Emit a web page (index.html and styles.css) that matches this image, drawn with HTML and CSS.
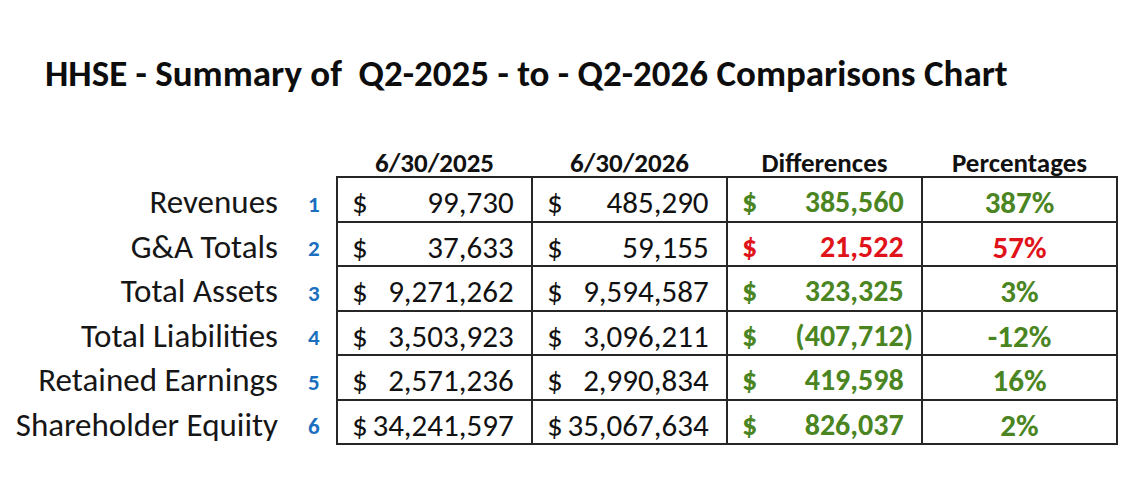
FILE: index.html
```html
<!DOCTYPE html>
<html>
<head>
<meta charset="utf-8">
<link rel="stylesheet" href="styles.css">
</head>
<body>
<h1 class="title">HHSE - Summary of&nbsp; Q2-2025 - to - Q2-2026 Comparisons Chart</h1>
<table class="chart">
  <colgroup>
    <col class="c-label"><col class="c-num"><col class="c-data"><col class="c-data"><col class="c-data"><col class="c-data">
  </colgroup>
  <thead>
    <tr>
      <th></th><th></th>
      <th class="hd">6/30/2025</th>
      <th class="hd">6/30/2026</th>
      <th class="hd">Differences</th>
      <th class="hd">Percentages</th>
    </tr>
  </thead>
  <tbody>
    <tr>
      <td class="label">Revenues</td><td class="num">1</td>
      <td class="money"><span class="cur">$</span><span class="val">99,730<span class="ph">)</span></span></td>
      <td class="money"><span class="cur">$</span><span class="val">485,290<span class="ph">)</span></span></td>
      <td class="money diff green"><span class="cur">$</span><span class="val">385,560<span class="ph">)</span></span></td>
      <td class="pct green">387%</td>
    </tr>
    <tr>
      <td class="label">G&amp;A Totals</td><td class="num">2</td>
      <td class="money"><span class="cur">$</span><span class="val">37,633<span class="ph">)</span></span></td>
      <td class="money"><span class="cur">$</span><span class="val">59,155<span class="ph">)</span></span></td>
      <td class="money diff red"><span class="cur">$</span><span class="val">21,522<span class="ph">)</span></span></td>
      <td class="pct red">57%</td>
    </tr>
    <tr>
      <td class="label">Total Assets</td><td class="num">3</td>
      <td class="money"><span class="cur">$</span><span class="val">9,271,262<span class="ph">)</span></span></td>
      <td class="money"><span class="cur">$</span><span class="val">9,594,587<span class="ph">)</span></span></td>
      <td class="money diff green"><span class="cur">$</span><span class="val">323,325<span class="ph">)</span></span></td>
      <td class="pct green">3%</td>
    </tr>
    <tr>
      <td class="label">Total Liabilities</td><td class="num">4</td>
      <td class="money"><span class="cur">$</span><span class="val">3,503,923<span class="ph">)</span></span></td>
      <td class="money"><span class="cur">$</span><span class="val">3,096,211<span class="ph">)</span></span></td>
      <td class="money diff green"><span class="cur">$</span><span class="val">(407,712)</span></td>
      <td class="pct green">-12%</td>
    </tr>
    <tr>
      <td class="label">Retained Earnings</td><td class="num">5</td>
      <td class="money"><span class="cur">$</span><span class="val">2,571,236<span class="ph">)</span></span></td>
      <td class="money"><span class="cur">$</span><span class="val">2,990,834<span class="ph">)</span></span></td>
      <td class="money diff green"><span class="cur">$</span><span class="val">419,598<span class="ph">)</span></span></td>
      <td class="pct green">16%</td>
    </tr>
    <tr>
      <td class="label">Shareholder Equiity</td><td class="num">6</td>
      <td class="money"><span class="cur">$</span><span class="val">34,241,597<span class="ph">)</span></span></td>
      <td class="money"><span class="cur">$</span><span class="val">35,067,634<span class="ph">)</span></span></td>
      <td class="money diff green"><span class="cur">$</span><span class="val">826,037<span class="ph">)</span></span></td>
      <td class="pct green">2%</td>
    </tr>
  </tbody>
</table>
</body>
</html>
```

FILE: styles.css
```css
html, body {
  margin: 0;
  padding: 0;
  background: #ffffff;
}
body {
  font-family: Carlito, "Open Sans", Lato, sans-serif;
  color: #111111;
  width: 1142px;
  height: 481px;
  overflow: hidden;
}
.title {
  margin: 51px 0 0 45px;
  font-size: 37px;
  font-weight: 700;
  line-height: 46px;
  color: #0d0d0d;
}
.chart {
  margin-top: 49px;
  border-collapse: collapse;
  table-layout: fixed;
  width: 1118px;
}
.c-label { width: 296px; }
.c-num { width: 41px; }
.c-data { width: 195px; }
th { padding: 0; }
.hd {
  font-size: 27px;
  font-weight: 700;
  height: 30px;
  vertical-align: bottom;
  padding-bottom: 0;
  text-align: center;
  color: #111;
  line-height: 26px;
}
td {
  height: 44.5px;
  padding: 6px 0 0 0;
  box-sizing: border-box;
  font-size: 33px;
  line-height: 32px;
  white-space: nowrap;
}
.label {
  text-align: right;
  padding-right: 18px;
  color: #161616;
}
.num {
  text-align: left;
  padding-left: 12px;
  padding-top: 9px;
  font-size: 23px;
  line-height: 26px;
  font-weight: 700;
  color: #1a6fc0;
}
.money, .pct {
  border: 2px solid #262626;
}
.money {
  padding: 6px 8px 0 14px;
  font-size: 31px;
}
.money .cur { float: left; }
.money .val { float: right; }
.ph { visibility: hidden; }
.diff { font-weight: 700; font-size: 30px; }
.pct {
  text-align: center;
  font-weight: 700;
  font-size: 31px;
}
.green { color: #4a8522; }
.red { color: #e0131a; }
```
